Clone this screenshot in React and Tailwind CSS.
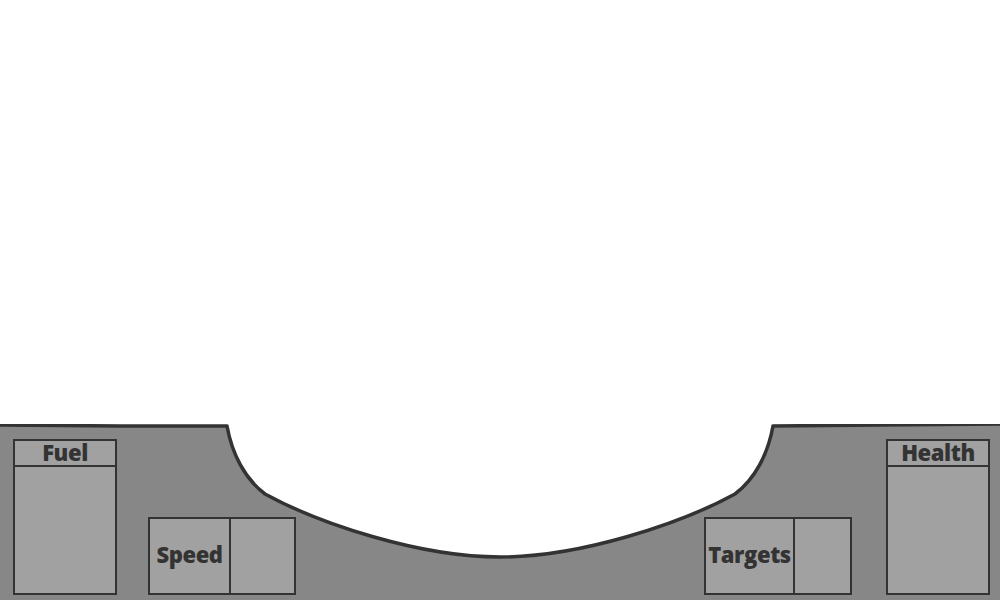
import React from "react";

const font = { fontFamily: "'Open Sans', Lato, sans-serif" };

const Gauge = ({ label }) => (
  <div className="w-[104px] h-[156px] border-2 border-[#333] bg-[#a1a1a1] flex flex-col">
    <div className="h-[26px] border-b-2 border-[#333] flex items-center justify-center text-[22px] font-extrabold tracking-[-0.4px] text-[#333] leading-none pb-[2px]">
      {label}
    </div>
    <div className="flex-1"></div>
  </div>
);

const Counter = ({ label, cellWidth }) => (
  <div className="w-[148px] h-[78px] border-2 border-[#333] bg-[#a1a1a1] flex">
    <div
      className={`${cellWidth} h-full border-r-2 border-[#333] flex items-center justify-center text-[22px] font-extrabold tracking-[-0.4px] text-[#333] leading-none pb-[5px]`}
    >
      {label}
    </div>
    <div className="flex-1"></div>
  </div>
);

const Dashboard = () => (
  <svg
    className="absolute inset-0"
    width="1000"
    height="176"
    viewBox="0 0 1000 176"
  >
    <path
      d="M0,1 L120,2 L227,2 C232,30 245,55 265,70 C320,100 420,133 500,133 C580,133 680,100 735,70 C755,55 768,30 773,2 L880,1 L1000,0 L1000,176 L0,176 Z"
      fill="#878787"
    />
    <path
      d="M0,1 L120,2 L227,2 C232,30 245,55 265,70 C320,100 420,133 500,133 C580,133 680,100 735,70 C755,55 768,30 773,2 L880,1 L1000,0"
      fill="none"
      stroke="#333"
      strokeWidth="3.5"
      strokeLinejoin="round"
    />
  </svg>
);

const App = () => {
  return (
    <div className="w-[1000px] h-[600px] bg-white flex flex-col overflow-hidden" style={font}>
      <div className="flex-1"></div>
      <div className="relative h-[176px]">
        <Dashboard />
        <div className="relative h-full flex items-end justify-between pl-[13px] pr-[10px] pb-[5px]">
          <div className="flex items-end gap-[31px]">
            <Gauge label="Fuel" />
            <Counter label="Speed" cellWidth="w-[81px]" />
          </div>
          <div className="flex items-end gap-[34px]">
            <Counter label="Targets" cellWidth="w-[89px]" />
            <Gauge label="Health" />
          </div>
        </div>
      </div>
    </div>
  );
};

export default App;
